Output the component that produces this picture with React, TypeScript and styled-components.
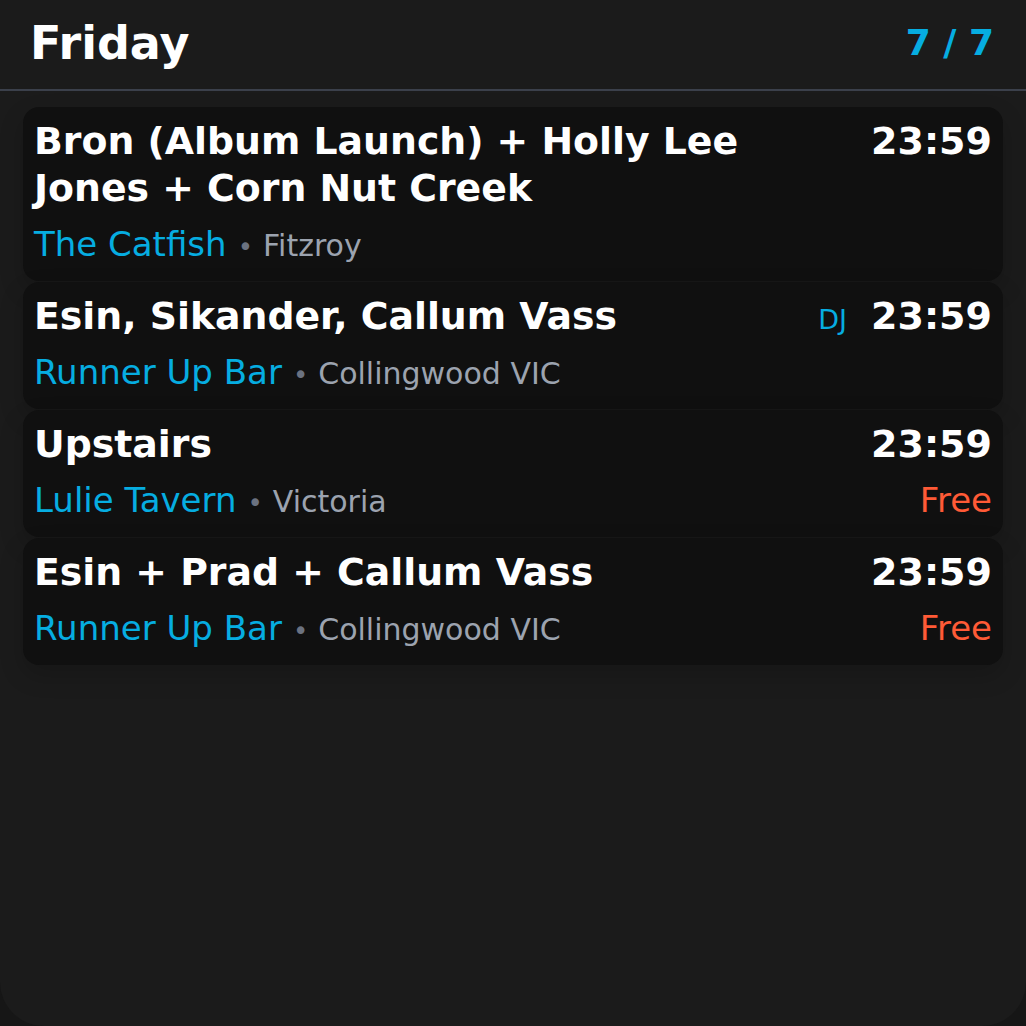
import React from "react";
import styled, { createGlobalStyle } from "styled-components";

const Global = createGlobalStyle`
  html, body { margin: 0; padding: 0; background: #161616; }
  body { font-family: "DejaVu Sans", "Noto Sans", sans-serif; }
  * { box-sizing: border-box; }
`;

const Screen = styled.div`
  min-height: 1026px;
  background: #1b1b1b;
  border-radius: 0 0 44px 44px;
  display: flex;
  flex-direction: column;
`;

const Header = styled.header`
  height: 91px;
  display: flex;
  align-items: center;
  justify-content: space-between;
  padding: 0 32px 4px 30px;
  border-bottom: 2px solid #3b404b;
`;

const DayTitle = styled.h1`
  margin: 0;
  font-size: 46px;
  font-weight: 700;
  color: #ffffff;
  line-height: 1;
`;

const Counter = styled.div`
  font-size: 36px;
  font-weight: 700;
  color: #06ade1;
  line-height: 1;
`;

const List = styled.div`
  display: flex;
  flex-direction: column;
  gap: 1px;
  padding: 16px 23px 0 23px;
`;

const Card = styled.article`
  background: #101010;
  border-radius: 16px;
  padding: 11px 11px 13px 11px;
  box-shadow: 0 10px 24px rgba(0, 0, 0, 0.18);
  display: grid;
  grid-template-columns: 1fr auto;
  column-gap: 20px;
`;

const Title = styled.div`
  font-size: 37.8px;
  font-weight: 700;
  line-height: 47px;
  color: #ffffff;
`;

const TimeCell = styled.div`
  font-size: 38px;
  line-height: 47px;
  height: 47px;
  text-align: right;
  white-space: nowrap;
`;

const Tag = styled.span`
  font-size: 27px;
  line-height: 1;
  color: #06ade1;
  margin-right: 24px;
`;

const Time = styled.span`
  font-weight: 700;
  line-height: 1;
  color: #ffffff;
`;

const VenueRow = styled.div`
  margin-top: 8px;
  font-size: 34px;
  line-height: 48px;
  height: 48px;
  white-space: nowrap;
`;

const Venue = styled.span`
  line-height: 1;
  color: #06ade1;
`;

const Dot = styled.span`
  font-size: 26px;
  line-height: 1;
  color: #6b7280;
  margin: 0 10px 0 11px;
`;

const Suburb = styled.span`
  font-size: 30px;
  line-height: 1;
  color: #9ca3af;
`;

const Price = styled.div`
  margin-top: 8px;
  line-height: 48px;
  height: 48px;
  font-size: 34px;
  color: #ff5a36;
  text-align: right;
`;

type Gig = {
  title: string;
  venue: string;
  suburb: string;
  time: string;
  tag?: string;
  price?: string;
};

const gigs: Gig[] = [
  {
    title: "Bron (Album Launch) + Holly Lee Jones + Corn Nut Creek",
    venue: "The Catfish",
    suburb: "Fitzroy",
    time: "23:59",
  },
  {
    title: "Esin, Sikander, Callum Vass",
    venue: "Runner Up Bar",
    suburb: "Collingwood VIC",
    time: "23:59",
    tag: "DJ",
  },
  {
    title: "Upstairs",
    venue: "Lulie Tavern",
    suburb: "Victoria",
    time: "23:59",
    price: "Free",
  },
  {
    title: "Esin + Prad + Callum Vass",
    venue: "Runner Up Bar",
    suburb: "Collingwood VIC",
    time: "23:59",
    price: "Free",
  },
];

export default function App() {
  return (
    <>
      <Global />
      <Screen>
        <Header>
          <DayTitle>Friday</DayTitle>
          <Counter>7 / 7</Counter>
        </Header>
        <List>
          {gigs.map((g, i) => (
            <Card key={i}>
              <Title>{g.title}</Title>
              <TimeCell>
                {g.tag && <Tag>{g.tag}</Tag>}
                <Time>{g.time}</Time>
              </TimeCell>
              <VenueRow>
                <Venue>{g.venue}</Venue>
                <Dot>•</Dot>
                <Suburb>{g.suburb}</Suburb>
              </VenueRow>
              <Price>{g.price ?? ""}</Price>
            </Card>
          ))}
        </List>
      </Screen>
    </>
  );
}
